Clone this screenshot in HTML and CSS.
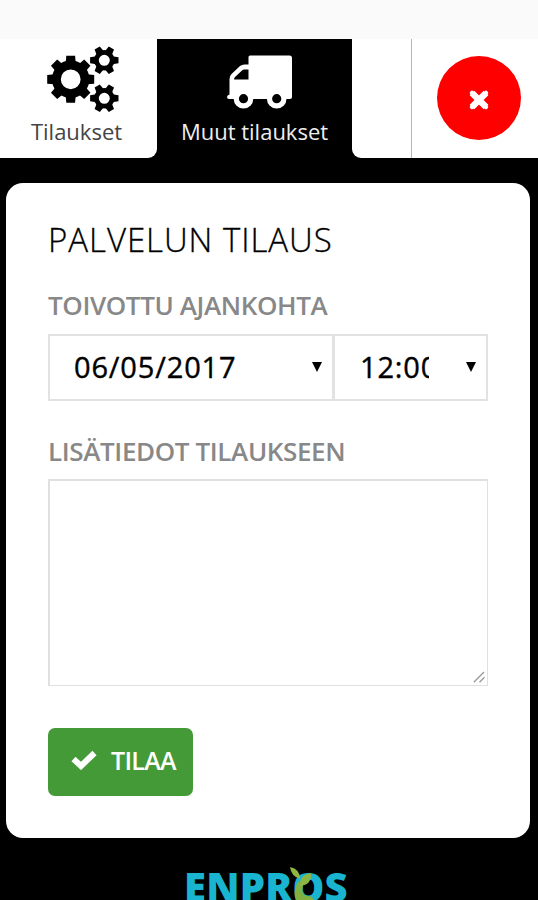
FILE: index.html
```html
<!DOCTYPE html>
<html lang="fi">
<head>
    <meta charset="UTF-8">
    <title>Palvelun tilaus</title>
    <link rel="stylesheet" href="styles.css">
</head>
<body>
    <nav class="tabs">
        <a class="tab tab-orders">
            <svg width="72" height="68" viewBox="0 0 72 68">
                <defs>
                    <path id="tooth" d="M-5 -16 L-4.4 -23.5 H4.4 L5 -16 Z"/>
                    <path id="smallTooth" d="M-4 -8 L-3 -14.2 H3 L4 -8 Z"/>
                    <g id="smallGear">
                        <circle r="7.9" fill="none" stroke="#000" stroke-width="4.8"/>
                        <use href="#smallTooth" transform="rotate(30)"/>
                        <use href="#smallTooth" transform="rotate(90)"/>
                        <use href="#smallTooth" transform="rotate(150)"/>
                        <use href="#smallTooth" transform="rotate(210)"/>
                        <use href="#smallTooth" transform="rotate(270)"/>
                        <use href="#smallTooth" transform="rotate(330)"/>
                    </g>
                </defs>
                <g transform="translate(23.7 33.3)">
                    <circle r="14.3" fill="none" stroke="#000" stroke-width="8.8"/>
                    <use href="#tooth"/>
                    <use href="#tooth" transform="rotate(45)"/>
                    <use href="#tooth" transform="rotate(90)"/>
                    <use href="#tooth" transform="rotate(135)"/>
                    <use href="#tooth" transform="rotate(180)"/>
                    <use href="#tooth" transform="rotate(225)"/>
                    <use href="#tooth" transform="rotate(270)"/>
                    <use href="#tooth" transform="rotate(315)"/>
                </g>
                <use href="#smallGear" transform="translate(57.3 14.3)"/>
                <use href="#smallGear" transform="translate(57.3 52.3)"/>
            </svg>
            <span>Tilaukset</span>
        </a>
        <a class="tab tab-other">
            <svg width="66" height="56" viewBox="0 0 66 56">
                <path fill="#fff" fill-rule="evenodd" d="M23 1.5 H62.5 Q65 1.5 65 4 V43 Q65 45 63 45 H2 Q0 45 0 43 Q0 41 2.5 40.5 V25 Q2.5 22 4.5 20 L13 12 Q15 10.5 17.5 10.5 H21.5 V3 Q21.5 1.5 23 1.5 Z M7 25.5 H21.5 V15.5 H17 Q16 15.5 15 16.5 L8 23 Q7 24 7 25.5 Z"/>
                <circle cx="16.5" cy="44.7" r="7.2" fill="#000" stroke="#fff" stroke-width="5.2"/>
                <circle cx="49.7" cy="44.7" r="7.2" fill="#000" stroke="#fff" stroke-width="5.2"/>
            </svg>
            <span>Muut tilaukset</span>
        </a>
        <div class="tab-spacer"></div>
        <div class="close-cell">
            <button class="close">
                <svg width="22" height="22" viewBox="0 0 22 22">
                    <path d="M4 4 L18 18 M18 4 L4 18" stroke="#fff" stroke-width="6.6"/>
                    <path d="M4 4 L18 18 M18 4 L4 18" stroke="#fff" stroke-width="4.5" stroke-linecap="round"/>
                </svg>
            </button>
        </div>
    </nav>

    <main class="card">
        <h1>PALVELUN TILAUS</h1>
        <h2 class="label-time">TOIVOTTU AJANKOHTA</h2>
        <div class="fields">
            <div class="select date">
                <span class="value">06/05/2017</span>
                <i class="arrow"></i>
            </div>
            <div class="select time">
                <span class="value">12:00</span>
                <i class="arrow"></i>
            </div>
        </div>
        <h2 class="label-info">LISÄTIEDOT TILAUKSEEN</h2>
        <div class="notes">
            <textarea></textarea>
            <svg class="grip" width="12" height="12" viewBox="0 0 12 12">
                <path d="M0.8 11.2 L11 1 M6.5 11.2 L11.5 6.2" stroke="#999" stroke-width="1.3"/>
            </svg>
        </div>
        <button class="submit">
            <svg width="26" height="20" viewBox="0 0 26 20">
                <path d="M2.5 9 L10 16 L23.5 3" fill="none" stroke="#fff" stroke-width="6"/>
            </svg>
            <span>TILAA</span>
        </button>
    </main>

    <footer>
        <div class="logo">
            <span>ENPROS</span>
            <svg class="leaf" width="32" height="36" viewBox="0 0 32 36">
                <path d="M9 14 L13 19 Q10 29 19 29 Q22 29 24 33 L22 36 H7 Q1 24 9 14 Z" fill="#7fb241"/>
                <path d="M0 0 Q10 2 10 12 Q1 9 0 0 Z" fill="#8fb543"/>
                <path d="M21 6 Q22 18 10 19 Q9 8 21 6 Z" fill="#8fb543"/>
            </svg>
        </div>
    </footer>
</body>
</html>
```
FILE: styles.css
```css
* {
    box-sizing: border-box;
}
body {
    margin: 0;
    height: 900px;
    overflow: hidden;
    background: #000;
    font-family: "Open Sans", "Noto Sans", sans-serif;
    border-top: 39px solid #fafafa;
}
button {
    border: none;
    padding: 0;
    font-family: inherit;
}

/* tabs */
.tabs {
    display: flex;
    height: 119px;
}
.tab {
    display: flex;
    flex-direction: column;
    align-items: center;
    font-size: 22px;
    line-height: 30px;
    white-space: nowrap;
}
.tab-orders {
    width: 157px;
    padding: 7px 0 0 8px;
    background: #fff;
    color: #444;
    border-bottom-right-radius: 9px;
}
.tab-orders span {
    margin: 2px 12px 0 0;
}
.tab-other {
    width: 195px;
    padding-top: 15px;
    color: #eee;
}
.tab-other svg {
    margin-left: 10px;
}
.tab-other span {
    margin-top: 6px;
}
.tab-spacer {
    width: 60px;
    background: #fff;
    border-right: 1px solid #b5b5b5;
    border-bottom-left-radius: 9px;
}
.close-cell {
    flex: 1;
    padding: 17px 0 0 25px;
    background: #fff;
}
.close {
    display: flex;
    align-items: center;
    justify-content: center;
    width: 84px;
    height: 84px;
    padding-top: 3px;
    border-radius: 50%;
    background: #f00;
}

/* order form */
.card {
    margin: 25px 8px 0 6px;
    height: 655px;
    padding: 36px 42px 0;
    border-radius: 17px;
    background: #fff;
}
h1, h2 {
    margin: 0;
    white-space: nowrap;
}
h1 {
    font-size: 33px;
    font-weight: 300;
    line-height: 42px;
    letter-spacing: 0.95px;
    -webkit-text-stroke: 0.3px #000;
    color: #000;
}
h2 {
    font-size: 26px;
    font-weight: 600;
    line-height: 36px;
    letter-spacing: -0.38px;
    color: #888;
}
.label-time {
    margin-top: 26px;
}
.fields {
    display: flex;
    margin-top: 11px;
    width: 440px;
    height: 67px;
}
.select {
    display: flex;
    align-items: center;
    justify-content: space-between;
    border: 2px solid #e2e2e2;
    padding: 0 10px 2px 24px;
    font-size: 29px;
    letter-spacing: 0.85px;
    -webkit-text-stroke: 0.4px #000;
    color: #000;
}
.date {
    width: 286px;
}
.time {
    flex: 1;
    border-left-width: 1px;
    padding-left: 25px;
}
.time .value {
    width: 69px;
    overflow: hidden;
}
.arrow {
    border: 5px solid transparent;
    border-top: 10px solid #000;
    border-bottom: 0;
}
.label-info {
    margin-top: 32px;
}
.notes {
    position: relative;
    margin-top: 10px;
    width: 440px;
    height: 207px;
}
textarea {
    display: block;
    width: 100%;
    height: 100%;
    border: 2px solid #e0e0e0;
    border-right-width: 1px;
    border-bottom-width: 1px;
    resize: none;
}
.grip {
    position: absolute;
    right: 3px;
    bottom: 3px;
}
.submit {
    display: flex;
    align-items: center;
    gap: 14px;
    width: 145px;
    height: 68px;
    margin-top: 42px;
    padding: 0 0 4px 23px;
    border-radius: 7px;
    background: #449a37;
    color: #fff;
    font-size: 25px;
    font-weight: 600;
    letter-spacing: -0.7px;
}

/* logo */
.logo {
    position: relative;
    width: 166px;
    margin: 24px 0 0 184px;
    font-size: 40px;
    font-weight: 800;
    line-height: 50px;
    letter-spacing: 0.2px;
    color: #18b4d0;
}
.leaf {
    position: absolute;
    left: 106px;
    top: 5px;
}
```
